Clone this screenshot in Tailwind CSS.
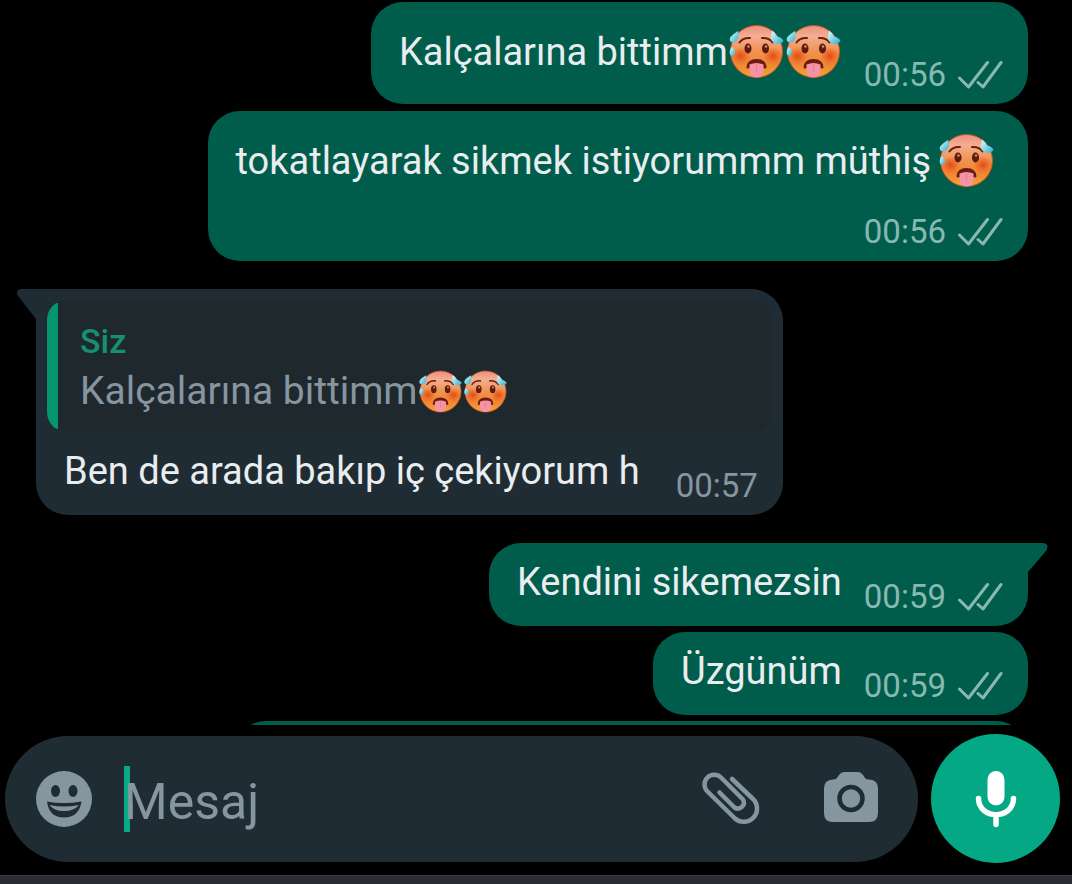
<!DOCTYPE html>
<html lang="tr">
<head>
<meta charset="utf-8">
<meta name="viewport" content="width=device-width, initial-scale=1">
<title>Sohbet</title>
<script src="https://cdn.jsdelivr.net/npm/@tailwindcss/browser@4"></script>
</head>
<body class="flex h-screen flex-col overflow-hidden bg-black font-[Roboto,sans-serif] text-[#e9edef]">

<svg class="absolute size-0" aria-hidden="true">
  <defs>
    <linearGradient id="skin" x1="0" y1="0" x2="0" y2="1">
      <stop offset="0" stop-color="#ea8f7c"/>
      <stop offset=".2" stop-color="#f4ae92"/>
      <stop offset=".5" stop-color="#f09350"/>
      <stop offset=".75" stop-color="#f0862f"/>
      <stop offset="1" stop-color="#f2a838"/>
    </linearGradient>
    <radialGradient id="cheek">
      <stop offset="0" stop-color="#e34a12"/>
      <stop offset="1" stop-color="#e8551b" stop-opacity="0"/>
    </radialGradient>
    <linearGradient id="sweat" x1="0" y1="0" x2="1" y2="1">
      <stop offset="0" stop-color="#e4fbfd"/>
      <stop offset=".5" stop-color="#82d8e8"/>
      <stop offset="1" stop-color="#2fa9c9"/>
    </linearGradient>
    <symbol id="hot" viewBox="0 0 57 57">
      <circle cx="28.500" cy="28.500" r="26" fill="url(#skin)" stroke="#c4532a" stroke-width="1"/>
      <ellipse cx="12.500" cy="33" rx="10" ry="9" fill="url(#cheek)"/>
      <ellipse cx="45" cy="33" rx="10" ry="9" fill="url(#cheek)"/>
      <path d="M11.500 19.500Q15 14.500 22 15M34 15Q41 14.500 44.500 19.500" fill="none" stroke="#6b1f10" stroke-width="2" stroke-linecap="round"/>
      <ellipse cx="20" cy="25.500" rx="3.500" ry="5" fill="#5c1a10"/>
      <ellipse cx="37.500" cy="25.500" rx="3.500" ry="5" fill="#5c1a10"/>
      <circle cx="20.500" cy="23.500" r="1.300" fill="#d98a6a"/>
      <circle cx="38" cy="23.500" r="1.300" fill="#d98a6a"/>
      <path d="M18.500 44.500Q19 36 28.500 36T38.500 44.500Q38 46 35 45L22 45Q19 46 18.500 44.500Z" fill="#6b1a14"/>
      <path d="M21.500 41.500Q28.500 38.500 35.500 41.500V47.500Q35 54.500 28.500 54.500T21.500 47.500Z" fill="#f493a3"/>
      <path d="M28.500 42V48" stroke="#e27f92" stroke-width="1.200" stroke-linecap="round"/>
      <path d="M10 8Q12 14 8.500 18Q5 21 2 18Q0 14 10 8Z" fill="url(#sweat)"/>
      <path d="M3.500 24Q8 27 7 31Q5 34 2.500 32Q.5 29 3.500 24Z" fill="url(#sweat)"/>
      <path d="M44 7.500Q48 10 49 13.500Q53 14 55.500 17.500Q54 21 49 21Q42 19 43 13Z" fill="url(#sweat)"/>
    </symbol>
    <symbol id="ticks" viewBox="0 0 46 30">
      <path d="M2.500 18L11.500 27L30.500 2.500M21 22.500L26 27L44 2.500" fill="none" stroke="currentColor" stroke-width="3" stroke-linecap="round" stroke-linejoin="round"/>
    </symbol>
  </defs>
</svg>

<main class="flex min-h-0 flex-1 flex-col items-end overflow-hidden pt-[2px] pr-[44px] pl-[36px] text-[38px] leading-[48px]">

  <article class="flex shrink-0 rounded-[32px] bg-[#005c4b] pr-[25px] pl-[28px]">
    <p class="flex items-center pt-[21px] pb-[24px]">Kalçalarına bittimm<svg role="img" aria-label="🥵" class="size-[57px]"><use href="#hot"/></svg><svg role="img" aria-label="🥵" class="size-[57px]"><use href="#hot"/></svg></p>
    <div class="ml-[22px] flex items-center gap-[11px] self-end pb-[9px] text-[33px] leading-10 text-[#88b9b0]"><time>00:56</time><svg class="h-[30px] w-[46px]" aria-label="İletildi"><use href="#ticks"/></svg></div>
  </article>

  <article class="mt-[7px] flex shrink-0 flex-col rounded-[32px] bg-[#005c4b] pr-[25px] pl-[28px]">
    <p class="flex items-center gap-[7px] pt-[21px]">tokatlayarak sikmek istiyorummm müthiş <svg role="img" aria-label="🥵" class="mr-2 size-[57px]"><use href="#hot"/></svg></p>
    <div class="mt-[23px] flex items-center gap-[11px] self-end pb-[9px] text-[33px] leading-10 text-[#88b9b0]"><time>00:56</time><svg class="h-[30px] w-[46px]" aria-label="İletildi"><use href="#ticks"/></svg></div>
  </article>

  <article class="relative mt-7 flex shrink-0 flex-col self-start rounded-[32px] rounded-tl-none bg-[#202c33] pt-[11px]">
    <svg class="absolute top-0 right-full h-[32px] w-[20px]" viewBox="0 0 20 32" aria-hidden="true"><path d="M20 0H5Q-1 1 2 7L20 30Z" fill="#202c33"/></svg>
    <blockquote class="mx-[11px] flex overflow-hidden rounded-[20px] bg-[#1e282d]">
      <span class="my-[3px] w-[11px] rounded-l-[12px] bg-[#06966f]"></span>
      <div class="pt-[21px] pb-[11px] pl-[22px]">
        <cite class="block text-[34px] leading-10 font-medium text-[#178f71] not-italic">Siz</cite>
        <p class="flex items-center text-[39px] leading-[60px] text-[#8696a0]">Kalçalarına bittimm<svg role="img" aria-label="🥵" class="size-[45px]"><use href="#hot"/></svg><svg role="img" aria-label="🥵" class="size-[45px]"><use href="#hot"/></svg></p>
      </div>
    </blockquote>
    <div class="flex gap-9 pr-[25px] pl-[28px]">
      <p class="pt-[15px] pb-5">Ben de arada bakıp iç çekiyorum h</p>
      <time class="self-end pb-[9px] text-[33px] leading-10 text-[#8696a0]">00:57</time>
    </div>
  </article>

  <article class="relative mt-7 flex shrink-0 rounded-[32px] rounded-tr-none bg-[#005c4b] pr-[25px] pl-[28px]">
    <svg class="absolute top-0 left-full h-[32px] w-[20px]" viewBox="0 0 20 32" aria-hidden="true"><path d="M0 0H15Q22 1 18 8L0 29Z" fill="#005c4b"/></svg>
    <p class="pt-[15px] pb-5">Kendini sikemezsin</p>
    <div class="ml-[22px] flex items-center gap-[11px] self-end pb-[9px] text-[33px] leading-10 text-[#88b9b0]"><time>00:59</time><svg class="h-[30px] w-[46px]" aria-label="İletildi"><use href="#ticks"/></svg></div>
  </article>

  <article class="mt-[6px] flex shrink-0 rounded-[32px] bg-[#005c4b] pr-[25px] pl-[28px]">
    <p class="pt-[15px] pb-5">Üzgünüm</p>
    <div class="ml-[22px] flex items-center gap-[11px] self-end pb-[9px] text-[33px] leading-10 text-[#88b9b0]"><time>00:59</time><svg class="h-[30px] w-[46px]" aria-label="İletildi"><use href="#ticks"/></svg></div>
  </article>

  <article class="mt-[6px] h-20 w-4/5 shrink-0 rounded-[32px] bg-[#005c4b]"></article>
</main>

<footer class="shrink-0">
  <form class="flex items-center gap-[13px] pt-[9px] pr-3 pb-3 pl-[5px]">
    <div class="flex h-[126px] min-w-0 flex-1 items-center rounded-full bg-[#202c33] pr-[39px] pl-[30px] text-[#8696a0]">
      <button type="button" aria-label="Emoji" class="shrink-0">
        <svg class="size-[58px]" viewBox="0 0 58 58"><circle cx="29" cy="29" r="28" fill="currentColor"/><ellipse cx="20.500" cy="21" rx="4.500" ry="6" fill="#202c33"/><ellipse cx="38" cy="21" rx="4.500" ry="6" fill="#202c33"/><path d="M12 31.500Q29 34.500 46.500 31.500Q44 47.500 29 47.500T12 31.500Z" fill="#202c33"/><path d="M14.500 35Q29 38 44 35Q39 41 29 41T14.500 35Z" fill="currentColor"/></svg>
      </button>
      <div class="relative ml-[31px] flex min-w-0 flex-1 items-center">
        <span class="absolute left-0 h-[66px] w-[6px] bg-[#0aa884]"></span>
        <input type="text" aria-label="Mesaj" placeholder="Mesaj" class="relative h-[76px] w-full min-w-0 bg-transparent pt-[6px] text-[50px] text-[#e9edef] outline-none placeholder:text-[#8696a0]">
      </div>
      <button type="button" aria-label="Ekle" class="shrink-0">
        <svg class="h-[54px] w-[60px]" viewBox="0 0 60 54" fill="none" stroke="currentColor" stroke-width="4.500" stroke-linecap="round" stroke-linejoin="round"><path d="M31 7L51.500 26.500A12.500 12.500 0 0 1 34 46.500L6.500 19.500A9.500 9.500 0 0 1 20 5.500L42 27.500A6 6 0 0 1 33.500 35.500L18.500 20.500"/></svg>
      </button>
      <button type="button" aria-label="Kamera" class="ml-[62px] shrink-0 pb-1">
        <svg class="h-[52px] w-[56px]" viewBox="0 0 56 52"><path d="M21 1H35Q38 1 40 4L42 7Q43 8.500 46 8.500Q55 9 55 17V42Q55 51 46 51H10Q1 51 1 42V17Q1 9 10 8.500Q13 8.500 14 7L16 4Q18 1 21 1Z" fill="currentColor"/><circle cx="28" cy="27.500" r="11.500" fill="none" stroke="#202c33" stroke-width="4.500"/></svg>
      </button>
    </div>
    <button type="button" aria-label="Sesli mesaj" class="flex size-[129px] shrink-0 items-center justify-center rounded-full bg-[#05a884] text-white">
      <svg class="h-[58px] w-[42px]" viewBox="0 0 42 58"><rect x="12.500" y="1" width="17" height="34.500" rx="8.500" fill="currentColor"/><path d="M3.500 28.500C4 50 38 50 38.500 28.500M21 45V54.500" fill="none" stroke="currentColor" stroke-width="5.500" stroke-linecap="round"/></svg>
    </button>
  </form>
  <div class="h-[9px] border-t border-[#3a3f44] bg-[#292d31]"></div>
</footer>
</body>
</html>
